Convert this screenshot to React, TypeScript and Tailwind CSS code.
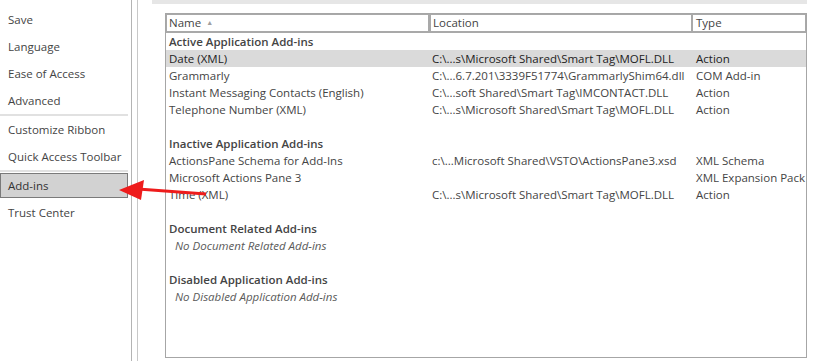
import React from "react";

const font = { fontFamily: '"Open Sans", "Noto Sans", sans-serif' };

type Row =
  | { kind: "group"; label: string }
  | { kind: "item"; name: string; location?: string; type?: string; selected?: boolean }
  | { kind: "empty"; label: string }
  | { kind: "blank" };

const rows: Row[] = [
  { kind: "group", label: "Active Application Add-ins" },
  { kind: "item", name: "Date (XML)", location: "C:\\...s\\Microsoft Shared\\Smart Tag\\MOFL.DLL", type: "Action", selected: true },
  { kind: "item", name: "Grammarly", location: "C:\\...6.7.201\\3339F51774\\GrammarlyShim64.dll", type: "COM Add-in" },
  { kind: "item", name: "Instant Messaging Contacts (English)", location: "C:\\...soft Shared\\Smart Tag\\IMCONTACT.DLL", type: "Action" },
  { kind: "item", name: "Telephone Number (XML)", location: "C:\\...s\\Microsoft Shared\\Smart Tag\\MOFL.DLL", type: "Action" },
  { kind: "blank" },
  { kind: "group", label: "Inactive Application Add-ins" },
  { kind: "item", name: "ActionsPane Schema for Add-Ins", location: "c:\\...Microsoft Shared\\VSTO\\ActionsPane3.xsd", type: "XML Schema" },
  { kind: "item", name: "Microsoft Actions Pane 3", location: "", type: "XML Expansion Pack" },
  { kind: "item", name: "Time (XML)", location: "C:\\...s\\Microsoft Shared\\Smart Tag\\MOFL.DLL", type: "Action" },
  { kind: "blank" },
  { kind: "group", label: "Document Related Add-ins" },
  { kind: "empty", label: "No Document Related Add-ins" },
  { kind: "blank" },
  { kind: "group", label: "Disabled Application Add-ins" },
  { kind: "empty", label: "No Disabled Application Add-ins" },
];

function NavItem({ label }: { label: string }) {
  return <div className="h-[27px] flex items-center pl-[8px]">{label}</div>;
}

function Separator() {
  return <div className="h-[2px] w-[128px] bg-[#e1e1e1]" />;
}

export default function App() {
  return (
    <div
      className="relative flex h-[361px] w-[817px] overflow-hidden bg-white text-[11.5px] text-[#444]"
      style={font}
    >
      {/* left navigation */}
      <aside className="w-[132px] shrink-0 border-r border-[#b4b4b4] pt-[6px]">
        <NavItem label="Save" />
        <NavItem label="Language" />
        <NavItem label="Ease of Access" />
        <NavItem label="Advanced" />
        <Separator />
        <NavItem label="Customize Ribbon" />
        <NavItem label="Quick Access Toolbar" />
        <Separator />
        <div className="h-[27px] py-[1px]">
          <div className="flex h-[25px] w-[128px] items-center border border-[#7a7a7a] bg-[#d2d2d2] pl-[7px] text-[#333]">
            Add-ins
          </div>
        </div>
        <NavItem label="Trust Center" />
      </aside>
      <div className="w-[6px] shrink-0 border-r border-[#c8c8c8]" />

      {/* content */}
      <main className="flex-1">
        <div className="ml-[14px] mr-[10px] h-[4px] bg-[#e6e6e6]" />
        <div className="ml-[27px] mt-[9px] flex h-[345px] w-[642px] flex-col border border-[#a6a6a6]">
          <div className="flex gap-[2px] bg-[#a9a9a9] px-[1px] pb-[2px] pt-[1px]">
            <div className="flex h-[16px] w-[261px] items-center bg-white pl-[2px]">
              Name
              <span className="ml-[5px] text-[7px] text-[#a0a0a0]">▲</span>
            </div>
            <div className="ml-[1px] flex h-[16px] w-[260px] items-center bg-white pl-[2px]">Location</div>
            <div className="flex h-[16px] flex-1 items-center bg-white pl-[3px]">Type</div>
          </div>
          <div className="flex flex-col">
            {rows.map((r, i) => {
              if (r.kind === "blank") return <div key={i} className="h-[17px]" />;
              if (r.kind === "group")
                return (
                  <div key={i} className="flex h-[17px] items-center pl-[3px] font-semibold">
                    {r.label}
                  </div>
                );
              if (r.kind === "empty")
                return (
                  <div key={i} className="flex h-[17px] items-center pl-[9px] italic text-[#5a5a5a]">
                    {r.label}
                  </div>
                );
              return (
                <div
                  key={i}
                  className={
                    "flex h-[17px] items-center whitespace-nowrap " +
                    (r.selected ? "bg-[#dadada] text-[#222]" : "")
                  }
                >
                  <div className="w-[266px] pl-[3px]">{r.name}</div>
                  <div className="w-[264px]">{r.location}</div>
                  <div>{r.type}</div>
                </div>
              );
            })}
          </div>
        </div>
      </main>

      {/* red callout arrow */}
      <svg className="pointer-events-none absolute left-0 top-0" width="817" height="361">
        <line x1="138" y1="189" x2="206" y2="194" stroke="#ee1c1c" strokeWidth="3" />
        <polygon points="119,190 144,180 141,200" fill="#ee1c1c" />
      </svg>
    </div>
  );
}
